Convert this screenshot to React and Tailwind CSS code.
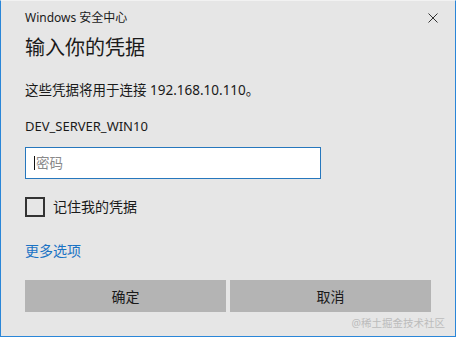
export default function App() {
  const font = { fontFamily: '"Noto Sans", "Noto Sans CJK SC", sans-serif' };
  return (
    <div
      className="w-[456px] h-[337px] bg-[#e6e6e6] border-x border-b border-[#2a86d8] border-t border-t-[#f2f2f2] text-[#1a1a1a] flex flex-col pl-6 pr-6 relative"
      style={font}
    >
      {/* Title bar */}
      <div className="h-[33px] flex items-center justify-between -mr-6 pr-[17px]">
        <span className="text-[12px] leading-none">Windows 安全中心</span>
        <svg width="10" height="10" viewBox="0 0 10 10" className="text-[#333]">
          <path d="M0.5 0.5 L9.5 9.5 M9.5 0.5 L0.5 9.5" stroke="currentColor" strokeWidth="1" fill="none" />
        </svg>
      </div>

      <h1 className="text-[20px] leading-[28px] font-normal">输入你的凭据</h1>

      <p className="mt-[18px] text-[13.5px] leading-[20px]">这些凭据将用于连接 192.168.10.110。</p>

      <p className="mt-[16px] text-[13px] leading-[20px]">DEV_SERVER_WIN10</p>

      <div className="mt-[11px] w-[296px] h-[32px] bg-white border border-[#2677bd] flex items-center pl-[8px]">
        <span className="w-px h-[14px] bg-[#111]" />
        <span className="text-[13.5px] text-[#8a8a8a] ml-px">密码</span>
      </div>

      <label className="mt-[18px] flex items-center gap-[8px] h-[20px]">
        <span className="w-[20px] h-[20px] border-2 border-[#333] bg-transparent" />
        <span className="text-[14px] leading-[20px]">记住我的凭据</span>
      </label>

      <a className="mt-[24px] text-[14px] leading-[20px] text-[#1a73c4] w-fit">更多选项</a>

      <div className="mt-[19px] flex gap-[4px] w-[406px]">
        <button className="flex-1 h-[32px] bg-[#b4b4b4] text-[14px]">确定</button>
        <button className="flex-1 h-[32px] bg-[#b4b4b4] text-[14px]">取消</button>
      </div>

      <div className="absolute right-[10px] bottom-[8px] text-[10.5px] text-[#bcbcbc] leading-none">@稀土掘金技术社区</div>
    </div>
  );
}
